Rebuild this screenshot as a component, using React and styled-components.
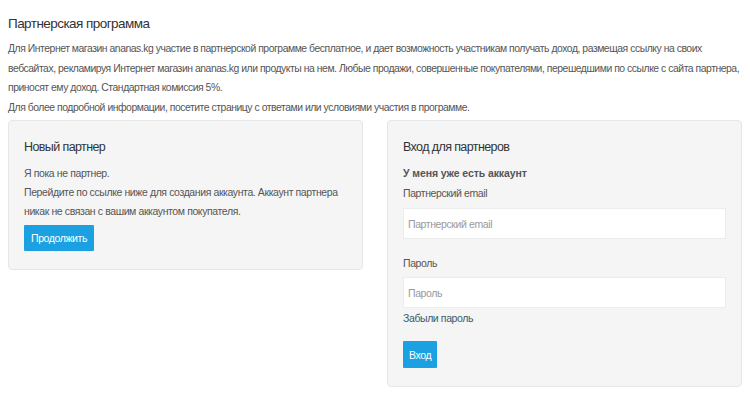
import React from "react";
import styled, { createGlobalStyle } from "styled-components";

const GlobalStyle = createGlobalStyle`
  body {
    margin: 0;
    background: #ffffff;
    font-family: "Liberation Sans", Arial, sans-serif;
    color: #555;
  }
`;

const Page = styled.div`
  width: 734px;
  padding: 0 8px;
`;

const Title = styled.h2`
  margin: 14px 0 5px;
  font-size: 13.5px;
  line-height: 20px;
  letter-spacing: -0.55px;
  font-weight: normal;
  color: #333;
`;

const Text = styled.p`
  margin: 0;
  font-size: 10.4px;
  line-height: 19.5px;
  letter-spacing: -0.46px;
  color: #555;
  white-space: nowrap;
`;

const Panels = styled.div`
  display: flex;
  align-items: flex-start;
  gap: 24px;
  margin-top: 3px;
`;

const Panel = styled.div`
  flex: 1;
  box-sizing: border-box;
  padding: 16px 15px 18px 15px;
  background: #f5f5f5;
  border: 1px solid #e6e6e6;
  border-radius: 4px;
  display: flex;
  flex-direction: column;
  align-items: flex-start;
`;

const PanelTitle = styled.h3`
  margin: 0 0 7px;
  font-size: 12.5px;
  line-height: 20px;
  letter-spacing: -0.6px;
  font-weight: normal;
  color: #333;
`;

const Line = styled.div`
  font-size: 10.5px;
  line-height: 19px;
  letter-spacing: ${(p) => (p.$bold ? "-0.1px" : "-0.4px")};
  color: #555;
  margin-top: ${(p) => p.$mt || 0}px;
  font-weight: ${(p) => (p.$bold ? "bold" : "normal")};
  white-space: nowrap;
`;

const Button = styled.button`
  margin-top: ${(p) => p.$mt || 0}px;
  height: ${(p) => p.$h}px;
  padding: 0 ${(p) => p.$px}px;
  border: none;
  border-radius: 1px;
  background: #1ba1e2;
  color: #fff;
  font-family: inherit;
  font-size: 10.5px;
  letter-spacing: -0.4px;
  cursor: pointer;
`;

const Input = styled.input`
  box-sizing: border-box;
  width: 100%;
  height: 31px;
  margin-top: ${(p) => p.$mt || 0}px;
  padding: 0 4px;
  border: 1px solid #ececec;
  background: #fff;
  font-family: inherit;
  font-size: 10.5px;
  letter-spacing: -0.4px;
  color: #555;
  outline: none;
  &::placeholder {
    color: #9a9a9a;
  }
`;

const Link = styled.a`
  margin-top: 1px;
  font-size: 10.5px;
  line-height: 19px;
  letter-spacing: -0.4px;
  color: #3b5a6b;
  text-decoration: none;
`;

export default function App() {
  return (
    <>
      <GlobalStyle />
      <Page>
        <Title>Партнерская программа</Title>
        <Text>
          Для Интернет магазин ananas.kg участие в партнерской программе бесплатное, и дает возможность участникам
          получать доход, размещая ссылку на своих
          <br />
          вебсайтах, рекламируя Интернет магазин ananas.kg или продукты на нем. Любые продажи, совершенные
          покупателями, перешедшими по ссылке с сайта партнера,
          <br />
          приносят ему доход. Стандартная комиссия 5%.
        </Text>
        <Text>Для более подробной информации, посетите страницу с ответами или условиями участия в программе.</Text>
        <Panels>
          <Panel>
            <PanelTitle>Новый партнер</PanelTitle>
            <Line>Я пока не партнер.</Line>
            <Line>Перейдите по ссылке ниже для создания аккаунта. Аккаунт партнера</Line>
            <Line>никак не связан с вашим аккаунтом покупателя.</Line>
            <Button $mt={4} $h={26} $px={7}>
              Продолжить
            </Button>
          </Panel>
          <Panel>
            <PanelTitle>Вход для партнеров</PanelTitle>
            <Line $bold>У меня уже есть аккаунт</Line>
            <Line $mt={1}>Партнерский email</Line>
            <Input $mt={5} placeholder="Партнерский email" />
            <Line $mt={15}>Пароль</Line>
            <Input $mt={4} type="password" placeholder="Пароль" />
            <Link href="#">Забыли пароль</Link>
            <Button $mt={13} $h={27} $px={6}>
              Вход
            </Button>
          </Panel>
        </Panels>
      </Page>
    </>
  );
}
